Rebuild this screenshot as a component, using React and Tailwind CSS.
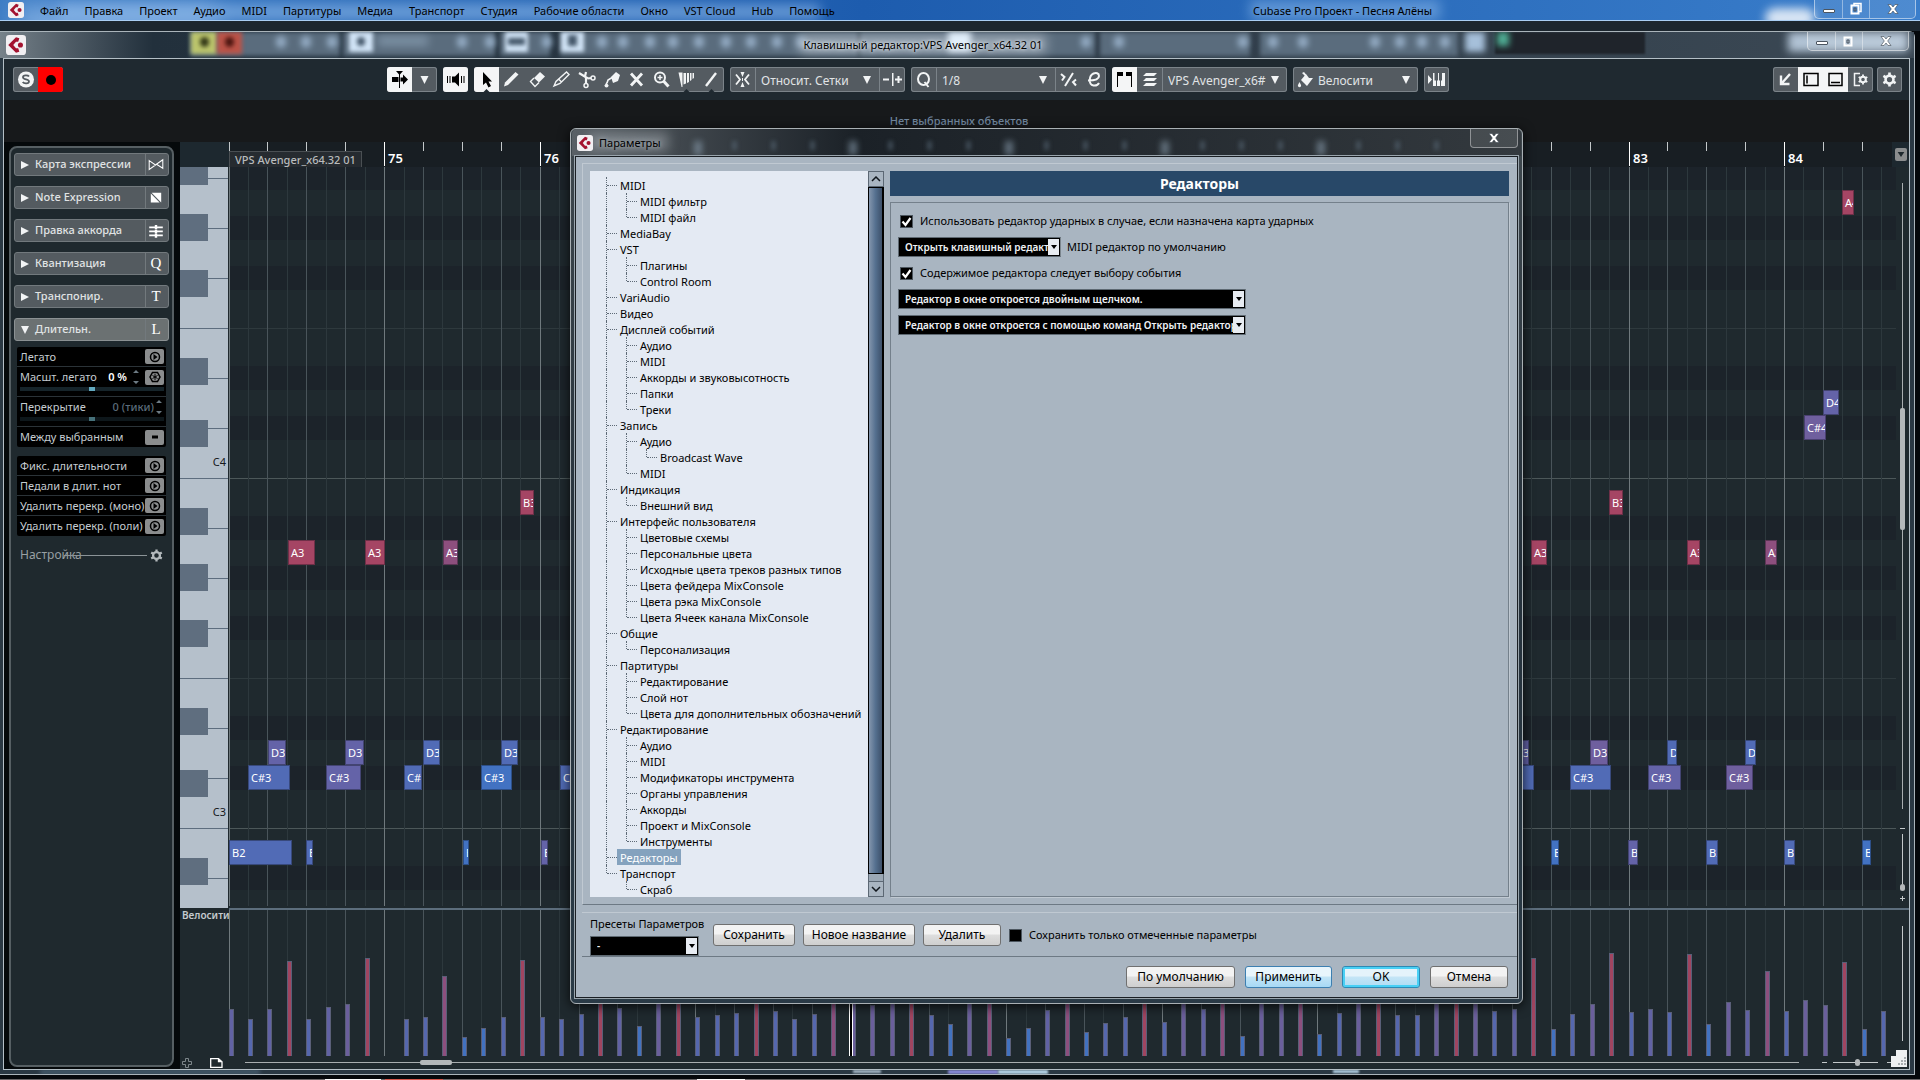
import { useState } from 'react';

const MENU = ['Файл', 'Правка', 'Проект', 'Аудио', 'MIDI', 'Партитуры', 'Медиа', 'Транспорт', 'Студия', 'Рабочие области', 'Окно', 'VST Cloud', 'Hub', 'Помощь'];

// [level, label]
const TREE = [
  [1, 'MIDI'], [2, 'MIDI фильтр'], [2, 'MIDI файл'],
  [1, 'MediaBay'],
  [1, 'VST'], [2, 'Плагины'], [2, 'Control Room'],
  [1, 'VariAudio'],
  [1, 'Видео'],
  [1, 'Дисплей событий'], [2, 'Аудио'], [2, 'MIDI'], [2, 'Аккорды и звуковысотность'], [2, 'Папки'], [2, 'Треки'],
  [1, 'Запись'], [2, 'Аудио'], [3, 'Broadcast Wave'], [2, 'MIDI'],
  [1, 'Индикация'], [2, 'Внешний вид'],
  [1, 'Интерфейс пользователя'], [2, 'Цветовые схемы'], [2, 'Персональные цвета'], [2, 'Исходные цвета треков разных типов'],
  [2, 'Цвета фейдера MixConsole'], [2, 'Цвета рэка MixConsole'], [2, 'Цвета Ячеек канала MixConsole'],
  [1, 'Общие'], [2, 'Персонализация'],
  [1, 'Партитуры'], [2, 'Редактирование'], [2, 'Слой нот'], [2, 'Цвета для дополнительных обозначений'],
  [1, 'Редактирование'], [2, 'Аудио'], [2, 'MIDI'], [2, 'Модификаторы инструмента'], [2, 'Органы управления'],
  [2, 'Аккорды'], [2, 'Проект и MixConsole'], [2, 'Инструменты'],
  [1, 'Редакторы'],
  [1, 'Транспорт'], [2, 'Скраб'],
];

const EIGHTH = 1400 / 72;
const STEPS = Array.from({ length: 86 }, (_, n) => n);
const BARS = [[8, '75'], [16, '76'], [24, '77'], [32, '78'], [40, '79'], [48, '80'], [56, '81'], [64, '82'], [72, '83'], [80, '84']];

const ROW_TOP = { A4: 23, D4: 223, 'C#4': 248, B3: 323, A3: 373, D3: 573, 'C#3': 598, B2: 673 };

// [pitch, left, width, colour]
const NOTES = [
  ['A3', 59, 27, 'red'], ['A3', 136, 20, 'red'], ['A3', 214, 15, 'magenta'], ['B3', 291, 14, 'red'],
  ['C#3', 19, 42, 'slate'], ['C#3', 97, 35, 'violet'], ['C#3', 175, 18, 'slate'], ['C#3', 252, 31, 'blue'], ['C#3', 331, 30, 'slate'],
  ['D3', 39, 18, 'violet'], ['D3', 116, 19, 'violet'], ['D3', 194, 17, 'slate'], ['D3', 272, 17, 'slate'],
  ['B2', 0, 63, 'slate'], ['B2', 77, 7, 'slate'], ['B2', 234, 6, 'blue'], ['B2', 312, 7, 'violet'],
  ['A4', 1613, 12, 'red'], ['D4', 1594, 16, 'violet'], ['C#4', 1575, 22, 'purple'], ['B3', 1380, 14, 'red'],
  ['A3', 1302, 16, 'red'], ['A3', 1458, 13, 'red'], ['A3', 1536, 12, 'magenta'],
  ['D3', 1283, 17, 'violet'], ['D3', 1361, 18, 'purple'], ['D3', 1438, 10, 'slate'], ['D3', 1516, 11, 'slate'],
  ['C#3', 1264, 41, 'slate'], ['C#3', 1341, 41, 'slate'], ['C#3', 1419, 33, 'violet'], ['C#3', 1497, 27, 'purple'],
  ['B2', 1322, 8, 'blue'], ['B2', 1399, 10, 'violet'], ['B2', 1477, 12, 'slate'], ['B2', 1555, 11, 'slate'], ['B2', 1633, 9, 'blue'],
];

const NOTE_COLORS = {
  red: 'bg-[#a54564] border-[#6e3048]',
  magenta: 'bg-[#8d4f7e] border-[#5d3656]',
  purple: 'bg-[#6f5f9e] border-[#4a4070]',
  violet: 'bg-[#6463a8] border-[#434472]',
  slate: 'bg-[#516bb6] border-[#38497c]',
  blue: 'bg-[#4272c2] border-[#2d4f88]',
};

const VELOCITY = [
  47, 37, 47, 95, 37, 49, 52, 98, 0, 37, 39, 80, 19, 28, 39, 96, 39, 37,
  42, 88, 48, 30, 70, 92, 39, 41, 43, 94, 45, 37, 42, 80, 70, 51, 65, 99,
  41, 32, 62, 80, 18, 28, 46, 80, 24, 33, 39, 88, 34, 56, 47, 80, 20, 54,
  54, 80, 22, 43, 66, 98, 41, 41, 66, 96, 54, 45, 47, 98, 27, 42, 52, 103,
  44, 47, 44, 102, 32, 54, 46, 85, 45, 56, 51, 94, 27, 45,
];

function velocityColor(v) {
  if (v >= 88) return 'bg-[#a04560]';
  if (v >= 75) return 'bg-[#8d4f7e]';
  if (v >= 50) return 'bg-[#6b5f9c]';
  if (v >= 46) return 'bg-[#6162a4]';
  if (v >= 33) return 'bg-[#5567ae]';
  return 'bg-[#4272c0]';
}

const BLACK_KEYS = [[0, 18], [47, 27], [103, 27], [191, 27], [253, 27], [341, 27], [397, 27], [453, 27], [541, 27], [603, 27], [691, 27]];
const KEY_LINES = [11, 61, 111, 161, 211, 261, 311, 361, 411, 461, 511, 561, 611, 661, 711];
const DARK_ROWS = [-1, 49, 99, 199, 249, 349, 399, 449, 549, 599, 699];

function Glyph({ children, className = 'size-[25px]' }) {
  return (
    <svg viewBox="0 0 25 25" className={`shrink-0 ${className}`} fill="currentColor" aria-hidden="true">
      {children}
    </svg>
  );
}

function Gear({ className }) {
  return (
    <svg viewBox="0 0 16 16" className={`shrink-0 ${className}`} fill="none" stroke="currentColor" aria-hidden="true">
      <circle cx="8" cy="8" r="4.200" strokeWidth="2.800" />
      <path d="M8 .5v3M8 12.500v3M1.500 4.250l2.600 1.500M11.900 10.250l2.600 1.500M1.500 11.750l2.600-1.500M11.900 5.750l2.600-1.500" strokeWidth="2.800" />
    </svg>
  );
}

function CubaseLogo({ className }) {
  return (
    <svg viewBox="0 0 18 18" className={`shrink-0 ${className}`} aria-hidden="true">
      <rect width="18" height="18" rx="3" fill="#f1eff2" />
      <path d="M2 9 9 2l3 1-1 3-2 0-2.500 3 2.500 3h2l1 3-3 1z" fill="#a3122f" />
      <circle cx="13" cy="9" r="2.300" fill="#a3122f" />
    </svg>
  );
}

function WindowButtons({ className, restore }) {
  return (
    <div className={`absolute top-0 flex h-[19px] w-[102px] rounded-b-[5px] border border-t-0 border-white/50 bg-white/10 text-white ${className}`}>
      <button aria-label="Свернуть" className="flex w-[28px] items-end justify-center border-r border-white/40 pb-[5px]">
        <span className="h-[4px] w-[12px] rounded-[1px] border border-[#4b5560] bg-white" />
      </button>
      <button aria-label="Развернуть" className="flex w-[27px] items-center justify-center border-r border-white/40">
        <svg viewBox="0 0 14 14" className="size-[14px]" fill="none" aria-hidden="true">
          {restore && <path d="M5 4V1.500h7v8H9.500" stroke="#fff" strokeWidth="1.500" />}
          <path d="M2.500 3.500h7v8h-7z" stroke="#fff" strokeWidth="2" />
          <path d="M5 6h2v3H5z" stroke="#4b5560" />
        </svg>
      </button>
      <button aria-label="Закрыть" className="flex flex-1 items-center justify-center">
        <CloseMark />
      </button>
    </div>
  );
}

function CloseMark() {
  return (
    <svg viewBox="0 0 12 10" className="h-[10px] w-[12px]" aria-hidden="true">
      <path d="M1 .5h3l2 2.500L8 .5h3L7.700 5 11 9.500H8L6 7 4 9.500H1L4.300 5z" fill="#fff" stroke="#3d4650" strokeWidth=".6" />
    </svg>
  );
}

function MenuBar() {
  return (
    <header className="relative flex h-[21px] shrink-0 items-center border-b border-[#a9cdf2] bg-gradient-to-r from-[#3d7cc4] via-[#1d5cae] via-45% to-[#3a7ecb] text-[11px] leading-[16px] text-black">
      <div className="absolute inset-0 overflow-hidden">
        <div className="absolute -bottom-3 left-4 h-6 w-[200px] bg-[#a9cdf5] opacity-70 blur-md" />
        <div className="absolute top-1 left-[60px] h-4 w-[760px] bg-[#8db9ea] opacity-60 blur-[6px]" />
        <div className="absolute top-0 left-[1250px] h-5 w-[190px] bg-[#7fb0e6] opacity-60 blur-[6px]" />
        <div className="absolute top-2 left-[1765px] h-5 w-[50px] rounded-full bg-white opacity-80 blur-[5px]" />
      </div>
      <CubaseLogo className="relative ml-[7px] h-[16px] w-[18px]" />
      <nav className="relative ml-[7px] flex pt-px">
        {MENU.map(item => (
          <button key={item} className="px-[8px]">{item}</button>
        ))}
      </nav>
      <div className="absolute top-[3px] left-[1253px]">Cubase Pro Проект - Песня Алёны</div>
      <WindowButtons className="right-[4px]" restore />
    </header>
  );
}

// soft shapes of the project window's toolbar behind the glass: [left, width]
const GHOST_PANELS = [[190, 150], [343, 152], [500, 50], [560, 298], [860, 235], [1100, 150], [1260, 198]];
const GHOST_DOTS = [276, 301, 327, 457, 485, 542, 597, 618, 645, 668, 694, 721, 746, 772, 796, 1081, 1114, 1238, 1268, 1298, 1370, 1395, 1417, 1440];

function TitleBar() {
  return (
    <div className="relative h-[26px] shrink-0 bg-gradient-to-r from-[#77828a] via-[#22303c] via-8% to-[#3b4854]">
      <div className="absolute inset-0 overflow-hidden">
        {GHOST_PANELS.map(([left, width]) => (
          <div key={left} className="absolute top-0 h-[24px] bg-[#5a6c7d] blur-[2px]" style={{ left, width }} />
        ))}
        {GHOST_DOTS.map(left => (
          <div key={left} className="absolute top-[4px] h-[12px] w-[10px] rounded-full bg-[#a6c0da] opacity-80 blur-[3px]" style={{ left }} />
        ))}
        <div className="absolute top-0 left-[191px] h-[22px] w-[26px] bg-[#bcc56c] blur-[2px]" />
        <div className="absolute top-0 left-[217px] h-[22px] w-[25px] bg-[#bb5348] blur-[2px]" />
        <div className="absolute top-[5px] left-[200px] h-[10px] w-[9px] rounded-full bg-[#333818] blur-[2px]" />
        <div className="absolute top-[5px] left-[225px] h-[10px] w-[9px] rounded-full bg-[#4b1510] blur-[2px]" />
        <div className="absolute top-0 left-[349px] h-[20px] w-[24px] bg-[#d3e6f8] blur-[2px]" />
        <div className="absolute top-[5px] left-[357px] h-[9px] w-[8px] rounded-full bg-[#44576a] blur-[2px]" />
        <div className="absolute top-[4px] left-[378px] h-[10px] w-[50px] bg-[#93a9bd] opacity-60 blur-[4px]" />
        <div className="absolute top-0 left-[505px] h-[20px] w-[23px] bg-[#d3e6f8] blur-[2px]" />
        <div className="absolute top-[6px] left-[508px] h-[7px] w-[17px] bg-[#44576a] blur-[2px]" />
        <div className="absolute top-0 left-[561px] h-[20px] w-[23px] bg-[#d3e6f8] blur-[2px]" />
        <div className="absolute top-[3px] left-[568px] h-[11px] w-[9px] bg-[#44576a] blur-[2px]" />
        <div className="absolute top-[3px] left-[800px] h-[18px] w-[246px] bg-[#c4ced8] opacity-60 blur-[6px]" />
        <div className="absolute top-0 left-[948px] h-[20px] w-[23px] bg-[#e2effb] blur-[3px]" />
        <div className="absolute top-0 left-[1465px] h-[20px] w-[20px] bg-[#a6c0da] blur-[3px]" />
        <div className="absolute top-0 left-[1495px] h-[22px] w-[150px] bg-[#1f242b] blur-[1px]" />
        <div className="absolute top-0 left-[1497px] h-[14px] w-[12px] bg-[#4fae94] blur-[3px]" />
        <div className="absolute top-0 left-[1788px] h-[20px] w-[120px] bg-[#cfe2f5] opacity-80 blur-[4px]" />
      </div>
      <CubaseLogo className="absolute top-[3px] left-[5px] h-[20px] w-[22px]" />
      <h1 className="relative pt-[4px] pr-[68px] text-center text-[11px] leading-[18px] text-black [text-shadow:0_0_6px_#e4ebf2,0_0_3px_#e4ebf2]">
        Клавишный редактор:VPS Avenger_x64.32 01
      </h1>
      <WindowButtons className="right-[5px]" />
    </div>
  );
}

function Group({ children }) {
  return (
    <div className="flex h-[25px] overflow-hidden rounded-[3px] bg-[#545b61] text-[#f2f4f5] ring-1 ring-[#7b8389] ring-inset">
      {children}
    </div>
  );
}

function Tool({ label, on, children }) {
  return (
    <button aria-label={label} className={on ? 'w-[25px] bg-[#f4f5f6] text-black' : 'w-[25px]'}>
      <Glyph>{children}</Glyph>
    </button>
  );
}

function ToolSelect({ label, value, className }) {
  return (
    <div className={`relative border-l border-[#7b8389] ${className}`}>
      <select aria-label={label} className="h-[25px] w-full appearance-none bg-transparent pr-[18px] pl-[5px] text-[12px] leading-[25px] text-[#e1e4e6]">
        <option>{value}</option>
      </select>
      <Triangle className="pointer-events-none absolute top-[9px] right-[8px]" />
    </div>
  );
}

function Triangle({ className }) {
  return (
    <svg viewBox="0 0 8 8" className={`size-[8px] ${className}`} fill="#f2f4f5" aria-hidden="true">
      <path d="M0 0h8L4 8z" />
    </svg>
  );
}

function Toolbar() {
  return (
    <div className="flex h-[41px] shrink-0 items-start justify-between bg-[#1f2930] pt-[8px] pr-[7px] pl-[9px]">
      <div className="flex">
        <Group>
          <Tool label="Соло">
            <circle cx="13" cy="12.500" r="8" />
            <path d="M16 9.500c-1-1.500-6-1.600-6 .7 0 2.800 6 1.500 6 4.300 0 2.300-5 2.300-6.300.5" fill="none" stroke="#545b61" strokeWidth="1.800" />
          </Tool>
          <button aria-label="Запись" className="flex w-[25px] items-center justify-center bg-[#fe0000]">
            <span className="size-[10px] rounded-full bg-black" />
          </button>
        </Group>
      </div>

      <div className="flex gap-[6px]">
        <Group>
          <Tool label="Автопрокрутка" on>
            <path d="M5 10h6.500v5H5zM13.500 10.500h2.500V7.500l5 5-5 5v-3h-2.500zM12 5h1v16h-1zM9 4h7l-3.500 4z" />
          </Tool>
          <Tool label="Параметры автопрокрутки"><path d="M8.500 9h8l-4 8z" /></Tool>
        </Group>
        <Group>
          <Tool label="Акустическая обратная связь" on>
            <path d="M4 9h1v7H4zM6.500 9h1v7h-1zM9 9.500h3l4-4v14l-4-4H9zM18 9h1v7h-1zM20.500 9h1v7h-1z" />
          </Tool>
        </Group>
        <Group>
          <Tool label="Выбор объектов" on>
            <path d="M9 5v13l3-2.500 2.500 5 2.500-1.500-2.500-4.500H18z" />
            <path d="M9.500 25l3-3 3 3z" fill="#1f2930" />
          </Tool>
          <Tool label="Карандаш"><path d="M5 19.500l1-4L16.500 5l3 2.500L9 18z" /></Tool>
          <Tool label="Ластик">
            <path d="M10 11l6-6 5 4.500-6 6z" />
            <path d="M10 11l-3.500 3.500 4.500 5 4-4" fill="none" stroke="currentColor" strokeWidth="1.400" />
          </Tool>
          <Tool label="Обрезка"><path d="M5 19l2-4.500L17.500 5l2.500 2.500L11 16.500zM10 12.500l2.500 2.500" fill="none" stroke="currentColor" strokeWidth="1.400" /></Tool>
          <Tool label="Ножницы">
            <path d="M5 6l9 5.500M12 5l-1 4.500M12 11l0 6M14 11.500l3-.5" fill="none" stroke="currentColor" strokeWidth="2.200" />
            <circle cx="12" cy="18.500" r="2" fill="none" stroke="currentColor" strokeWidth="1.500" />
            <circle cx="19" cy="11" r="2" fill="none" stroke="currentColor" strokeWidth="1.500" />
          </Tool>
          <Tool label="Клей">
            <path d="M12 10l5-5 4 3-2 6-5 2z" />
            <path d="M14 10l-5 3-1 3" fill="none" stroke="currentColor" strokeWidth="1.600" />
            <path d="M7.500 15l2 3.500a2 2 0 11-4 0z" />
          </Tool>
          <Tool label="Заглушить"><path d="M7 6.500l11 12M18 6.500l-11 12" stroke="currentColor" strokeWidth="2.800" /></Tool>
          <Tool label="Масштаб">
            <circle cx="11" cy="10.500" r="5" fill="none" stroke="currentColor" strokeWidth="2" />
            <path d="M8.500 10.500h5M11 8v5" stroke="currentColor" strokeWidth="1.500" />
            <path d="M14.500 14l5 5.500" stroke="currentColor" strokeWidth="3" />
          </Tool>
          <Tool label="Компинг">
            <path d="M4.500 5.500h4v14.500h-1zM9.500 6h2.500v10.500l-2.500 1zM13 6h2v9l-2 1zM16 6h1.500v7l-1.500 1zM18.500 6h1.500v5l-1.500 1z" />
            <path d="M9.500 25l3-3 3 3z" fill="#1f2930" />
          </Tool>
          <Tool label="Линия">
            <path d="M7 19L17 6" stroke="currentColor" strokeWidth="2.400" />
            <path d="M9.500 25l3-3 3 3z" fill="#1f2930" />
          </Tool>
        </Group>
        <Group>
          <Tool label="Привязка">
            <path d="M6 7.500l4 5-4 5M19 7.500l-4 5 4 5" fill="none" stroke="currentColor" strokeWidth="1.800" />
            <path d="M10.500 5h4l-2 5zM10.500 20h4l-2-5zM12 11h1v3h-1z" />
          </Tool>
          <ToolSelect label="Тип привязки" value="Относит. Сетки" className="w-[124px]" />
          <div className="border-l border-[#7b8389]">
            <Tool label="Тип сетки"><path d="M3 11.500h6v2H3zM12 6h1.500v13H12zM15 11.500h7v2h-7zM17.500 9h2v7h-2z" /></Tool>
          </div>
        </Group>
        <Group>
          <Tool label="Квантизация">
            <path d="M7 12a5.500 6 0 1011 0 5.500 6 0 10-11 0M13.500 15l4 5" fill="none" stroke="currentColor" strokeWidth="2" />
          </Tool>
          <ToolSelect label="Пресеты квантизации" value="1/8" className="w-[119px]" />
          <div className="flex border-l border-[#7b8389]">
            <Tool label="Итеративная квантизация">
              <path d="M17 6L9 19M5 7l3.500 3L6 13.500M20 12.500l-3 2.500 3 3.500" fill="none" stroke="currentColor" strokeWidth="2" />
            </Tool>
            <Tool label="Панель квантизации">
              <path d="M7 13.500c8 0 11-2 11-4.500 0-3-3-3.500-5.500-2.500-4.500 2-5.500 11 0 12 2.500.3 4.500-.5 5.500-2.500" fill="none" stroke="currentColor" strokeWidth="2" />
            </Tool>
          </div>
        </Group>
        <Group>
          <Tool label="Границы партий" on><path d="M5 5h1v15H5zM6 5h5v4H6zM19 5h1v15h-1zM14 5h5v4h-5z" /></Tool>
          <Tool label="Редактировать активную партию">
            <path d="M9 6h11l-3 3H6zM9 11h11l-3 3H6zM9 16h11l-3 3H6z" />
          </Tool>
          <ToolSelect label="Активная партия" value="VPS Avenger_x6#" className="w-[125px]" />
        </Group>
        <div className="flex h-[25px] rounded-[3px] bg-[#545b61] text-[#f2f4f5] ring-1 ring-[#7b8389] ring-inset">
          <Glyph>
            <path d="M8 13l5-6 3 4h4l-6 8-3-3zM9 6l2-1 5 6-1.500.5z" />
            <path d="M6.500 15l1.500 3a1.600 1.600 0 11-3 0z" />
          </Glyph>
          <div className="relative">
            <select aria-label="Цвета событий" className="h-[25px] w-[100px] appearance-none bg-transparent text-[12px] leading-[25px] text-[#e1e4e6]">
              <option>Велосити</option>
            </select>
            <Triangle className="pointer-events-none absolute top-[9px] right-[8px]" />
          </div>
        </div>
        <Group>
          <Tool label="Пошаговый ввод">
            <path d="M4 8l4 4.500L4 17zM9 6h1.500v7.500h1.500V19H9zM13 19v-5.500h1V6h1v7.500h1V19zM17 19v-5.500h1V6h3v13z" />
          </Tool>
        </Group>
      </div>

      <div className="flex gap-[4px]">
        <Group>
          <Tool label="Открыть в нижней зоне"><path d="M17 7l-8 9M8 8.500v8.500h8.500" fill="none" stroke="currentColor" strokeWidth="2.400" /></Tool>
          <Tool label="Левая зона" on><path d="M6 6.500h14v12H6zM9 8.500v8" fill="none" stroke="currentColor" strokeWidth="1.500" /></Tool>
          <Tool label="Нижняя зона" on><path d="M6 6.500h13v12H6zM8 15.500h9" fill="none" stroke="currentColor" strokeWidth="1.500" /></Tool>
          <Tool label="Настройка зон">
            <path d="M12 6.500H6.500v12H12" fill="none" stroke="currentColor" strokeWidth="1.500" />
            <circle cx="15" cy="12.500" r="2.800" fill="none" stroke="currentColor" strokeWidth="2" />
            <path d="M15 7.500v2M15 15.500v2M10.700 10l1.700 1M17.600 14l1.700 1M10.700 15l1.700-1M17.600 11l1.700-1" stroke="currentColor" strokeWidth="1.800" />
          </Tool>
        </Group>
        <Group>
          <button aria-label="Настройка панели" className="flex w-[25px] items-center justify-center">
            <Gear className="size-[15px]" />
          </button>
        </Group>
      </div>
    </div>
  );
}

const SECTIONS = [
  ['Карта экспрессии', <path d="M4 7l8 5.500L4 18zM21 6l-8 5.500 8 5z" fill="none" stroke="currentColor" strokeWidth="1.300" />],
  ['Note Expression', <path d="M7 6h12v12zM6 7v11h11z" />],
  ['Правка аккорда', <path d="M4 7h17v2H4zM4 12h17v2H4zM4 17h17v2H4zM11 5h3v5h-3zM11 10.500h3v5h-3zM11 16h3v5h-3z" />],
  ['Квантизация', 'Q'],
  ['Транспонир.', 'T'],
  ['Длительн.', 'L'],
];

function ActionButton({ label, children }) {
  return (
    <button aria-label={label} className="flex h-[15px] w-[19px] shrink-0 items-center justify-center rounded-[2px] bg-[#8b8d8e]">
      <svg viewBox="0 0 12 12" className="size-[12px]" fill="none" stroke="#000" strokeWidth="1.500" aria-hidden="true">
        {children}
      </svg>
    </button>
  );
}

const PLAY = <><circle cx="6" cy="6" r="4.500" /><path d="M4.500 3l4 3-4 3z" fill="#000" stroke="none" /></>;

function Spin({ className }) {
  return (
    <svg viewBox="0 0 6 14" className={`h-[14px] w-[6px] shrink-0 ${className}`} fill="#6d7b84" aria-hidden="true">
      <path d="M3 0l3 3H0zM3 14l3-3H0z" />
    </svg>
  );
}

function InspectorRow({ label, children }) {
  return (
    <div className="flex h-[20px] items-center justify-between border-b border-[#2b3338] pr-[2px] pl-[3px] last:border-b-0">
      <span className="whitespace-nowrap">{label}</span>
      {children}
    </div>
  );
}

function Inspector() {
  return (
    <aside className="w-[176px] shrink-0 bg-[#05090b] pt-[4px] pb-[2px] pl-[5px]">
      <div className="h-full w-[165px] rounded-[8px] border-2 border-[#565f63] bg-[#1f292e] px-[3px] pt-[5px]">
        <div className="flex flex-col gap-[10px]">
          {SECTIONS.map(([name, icon], i) => (
            <button
              key={name}
              className={`flex h-[23px] items-center rounded-[3px] border text-[11px] font-medium text-[#e0e3e4] ${i === 5 ? 'border-[#8b9193] bg-[#6b7172]' : 'border-[#72797d] bg-[#545b60]'}`}
            >
              <svg viewBox="0 0 8 8" className="mx-[6px] size-[8px]" fill="#f2f4f5" aria-hidden="true">
                <path d={i === 5 ? 'M0 0h8L4 8z' : 'M0 0l8 4-8 4z'} />
              </svg>
              <span className="flex-1 text-left whitespace-nowrap">{name}</span>
              <span className="flex h-full w-[23px] items-center justify-center border-l border-[#72797d] pr-[2px] text-[15px] text-white">
                {typeof icon === 'string' ? <span className="font-['Liberation_Serif',serif]">{icon}</span> : <Glyph className="size-[20px]">{icon}</Glyph>}
              </span>
            </button>
          ))}
        </div>

        <div className="mx-[3px] mt-[6px] flex flex-col gap-[9px] text-[11px] leading-[14px] text-[#c5ccd1]">
          <div className="rounded-[2px] bg-black">
            <InspectorRow label="Легато"><ActionButton label="Легато">{PLAY}</ActionButton></InspectorRow>
            <div className="h-[30px] border-b border-[#2b3338] pr-[2px] pl-[3px]">
              <div className="flex h-[20px] items-center">
                <span className="flex-1">Масшт. легато</span>
                <span className="font-semibold text-white">0 %</span>
                <Spin className="mx-[6px]" />
                <ActionButton label="Масштаб легато">
                  <path d="M3.500 1.500h5l2.500 4.500-2.500 4.500h-5L1 6z" />
                  <path d="M6 3v6M3.500 4.500l5 3M8.500 4.500l-5 3" strokeWidth="1" />
                </ActionButton>
              </div>
              <input type="range" aria-label="Масштаб легато" className="block h-[4px] w-full appearance-none bg-[#16242a] [&::-webkit-slider-thumb]:h-[4px] [&::-webkit-slider-thumb]:w-[6px] [&::-webkit-slider-thumb]:appearance-none [&::-webkit-slider-thumb]:bg-[#62a9bf]" />
            </div>
            <div className="h-[30px] border-b border-[#2b3338] pr-[2px] pl-[3px]">
              <div className="flex h-[20px] items-center">
                <span className="flex-1">Перекрытие</span>
                <span className="font-medium text-[#5c6c7a]">0 (тики)</span>
                <Spin className="mx-[2px]" />
              </div>
              <input type="range" aria-label="Перекрытие" className="block h-[4px] w-full appearance-none bg-[#0e171b] [&::-webkit-slider-thumb]:h-[4px] [&::-webkit-slider-thumb]:w-[6px] [&::-webkit-slider-thumb]:appearance-none [&::-webkit-slider-thumb]:bg-[#46717a]" />
            </div>
            <InspectorRow label="Между выбранным"><ActionButton label="Между выбранным"><path d="M3 6h6" strokeWidth="3" /></ActionButton></InspectorRow>
          </div>
          <div className="rounded-[2px] bg-black">
            {['Фикс. длительности', 'Педали в длит. нот', 'Удалить перекр. (моно)', 'Удалить перекр. (поли)'].map(label => (
              <InspectorRow key={label} label={label}><ActionButton label={label}>{PLAY}</ActionButton></InspectorRow>
            ))}
          </div>
        </div>

        <div className="mx-[6px] mt-[10px] flex items-center text-[12px] leading-[18px] text-[#98a0a4]">
          <span>Настройка</span>
          <span className="-ml-[18px] mr-[3px] h-px flex-1 bg-[#8b9397]" />
          <Gear className="size-[13px] text-[#b4babd]" />
        </div>
      </div>
    </aside>
  );
}

function Ruler() {
  return (
    <div className="flex h-[25px] shrink-0 bg-[#1d282f]">
      <div className="w-[49px] shrink-0" />
      <div className="relative flex-1 overflow-hidden bg-[#181e23]">
        {STEPS.filter(n => n % 2 === 0).map(n => (
          <div key={n} className={n % 8 === 0 && n > 0 ? 'absolute top-0 h-[24px] w-px bg-white' : 'absolute top-0 h-[9px] w-px bg-[#c3c8ca]'} style={{ left: Math.floor(n * EIGHTH) }} />
        ))}
        {BARS.map(([n, label]) => (
          <span key={label} className="absolute top-[7px] text-[13px] leading-[18px] font-semibold text-white" style={{ left: Math.floor(n * EIGHTH) + 4 }}>{label}</span>
        ))}
        <span className="absolute bottom-0 left-0 h-[16px] border border-b-0 border-[#4a4f53] bg-[#262b30] px-[5px] text-[11px] leading-[15px] font-medium whitespace-nowrap text-[#b9bbbc]">VPS Avenger_x64.32 01</span>
      </div>
      <div className="w-[17px] shrink-0 pt-[6px] pl-[3px]">
        <button aria-label="Формат линейки" className="flex h-[13px] w-[12px] items-center justify-center rounded-[2px] bg-[#8b8d8e]">
          <svg viewBox="0 0 8 6" className="h-[5px] w-[8px]" aria-hidden="true"><path d="M0 0h8L4 6z" fill="#1f292e" /></svg>
        </button>
      </div>
    </div>
  );
}

function Keyboard() {
  return (
    <div className="relative w-[48px] shrink-0 overflow-hidden bg-[#b5c0cb]">
      <svg className="absolute inset-0 h-full w-full" shapeRendering="crispEdges" aria-hidden="true">
        {KEY_LINES.map(y => <rect key={y} x="0" y={y} width="48" height="1" fill="#5d6d7e" />)}
        {KEY_LINES.filter(y => ![161, 311, 511, 661].includes(y)).map(y => <rect key={y} x="0" y={y} width="28" height="1" fill="#b5c0cb" />)}
        {BLACK_KEYS.map(([y, h]) => <rect key={y} x="0" y={y} width="28" height={h} fill="#5f6e7f" />)}
      </svg>
      <span className="absolute top-[287px] right-[2px] text-[11px] leading-[16px] text-[#16191c]">C4</span>
      <span className="absolute top-[637px] right-[2px] text-[11px] leading-[16px] text-[#16191c]">C3</span>
    </div>
  );
}

function gridColor(n) {
  if (n % 8 === 0) return '#6f797d';
  return n % 2 === 0 ? '#49545a' : '#2d383d';
}

function NoteGrid() {
  return (
    <div className="relative ml-px flex-1 overflow-hidden bg-[#1f292e]">
      <svg className="absolute inset-0 h-full w-full" shapeRendering="crispEdges" aria-hidden="true">
        {DARK_ROWS.map(y => <rect key={y} x="0" y={y} width="100%" height="24" fill="#1c232a" />)}
        {[161, 511].map(y => <rect key={y} x="0" y={y} width="100%" height="1" fill="#2e393d" />)}
        {[311, 661].map(y => <rect key={y} x="0" y={y} width="100%" height="1" fill="#4c5759" />)}
        {STEPS.map(n => <rect key={n} x={Math.floor(n * EIGHTH)} y="0" width="1" height="739" fill={gridColor(n)} />)}
      </svg>
      {NOTES.map(([pitch, left, width, color]) => (
        <div
          key={pitch + left}
          className={`absolute h-[25px] overflow-hidden border pl-[2px] text-[11px] leading-[23px] text-white ${NOTE_COLORS[color]}`}
          style={{ left, width, top: ROW_TOP[pitch] }}
        >
          {pitch}
        </div>
      ))}
    </div>
  );
}

function VerticalScroll() {
  return (
    <div className="flex w-[13px] shrink-0 flex-col items-center pt-[16px]">
      <div className="relative w-px flex-1 bg-[#a9aeb0]">
        <span className="absolute top-[36%] -left-[2px] h-[122px] w-[5px] rounded-[2px] bg-[#b4b8ba]" />
      </div>
      <span className="mt-[19px] h-px w-[5px] bg-[#c3c8ca]" />
      <span className="mt-[5px] h-[50px] w-px bg-[#c3c8ca]" />
      <span className="h-[7px] w-[5px] rounded-full bg-[#b4b8ba]" />
      <svg viewBox="0 0 5 5" className="mt-[5px] mb-[7px] size-[5px]" aria-hidden="true"><path d="M2 0h1v5H2zM0 2h5v1H0z" fill="#c3c8ca" /></svg>
    </div>
  );
}

function VelocityLane() {
  return (
    <div className="flex h-[148px] shrink-0">
      <div className="w-[49px] shrink-0 bg-[#1f292e] pl-[2px] text-[10px] leading-[14px] font-semibold text-[#c5cbce]">Велосити</div>
      <div className="relative flex-1 overflow-hidden border-t-2 border-[#5c6d7c] bg-[#1f292e]">
        <svg className="absolute inset-0 h-full w-full" shapeRendering="crispEdges" aria-hidden="true">
          {STEPS.map(n => <rect key={n} x={Math.floor(n * EIGHTH)} y="0" width="1" height="100%" fill={gridColor(n)} />)}
        </svg>
        {VELOCITY.map((v, n) => v > 0 && (
          <div key={n} className={`absolute bottom-0 w-[5px] border-x border-t border-[#5a5f78] ${velocityColor(v)}`} style={{ left: Math.floor(n * EIGHTH), height: v }} />
        ))}
        <div className="absolute inset-y-0 left-[620px] w-[4px] border-x border-white bg-black" />
      </div>
      <div className="flex w-[13px] shrink-0 justify-center border-t-2 border-[#5c6d7c] pt-[16px] pb-[15px]">
        <span className="w-px bg-[#c3c8ca]" />
      </div>
    </div>
  );
}

function BottomBar() {
  return (
    <div className="flex h-[13px] shrink-0 items-center">
      <svg viewBox="0 0 10 10" className="ml-[2px] size-[10px]" fill="none" stroke="#7d868a" aria-hidden="true">
        <path d="M3.500.5h3v3h3v3h-3v3h-3v-3h-3v-3h3z" />
      </svg>
      <svg viewBox="0 0 13 10" className="ml-[18px] h-[10px] w-[13px]" fill="none" stroke="#fff" strokeWidth="1.300" aria-hidden="true">
        <path d="M.7.7H8.500l3.500 3v5.600H.7zM8.500.7v3h3.500" />
      </svg>
      <div className="relative ml-[22px] h-px flex-1 bg-[#a9aeb0]">
        <span className="absolute -top-[2px] left-[175px] h-[5px] w-[32px] rounded-[2px] bg-[#b4b8ba]" />
      </div>
      <span className="ml-[23px] h-px w-[5px] bg-[#c3c8ca]" />
      <span className="ml-[6px] h-px w-[22px] bg-[#c3c8ca]" />
      <span className="h-[7px] w-[5px] rounded-full bg-[#b4b8ba]" />
      <span className="h-px w-[18px] bg-[#c3c8ca]" />
      <span className="ml-[9px] h-px w-[4px] bg-[#c3c8ca]" />
      <span className="mr-[2px] mb-[8px] flex h-[17px] w-[16px] items-end justify-end bg-[#eef0f1] p-px">
        <svg viewBox="0 0 9 9" className="size-[9px]" fill="#a8adb0" aria-hidden="true">
          <path d="M7 0h2v2H7zM4 3h2v2H4zM7 3h2v2H7zM1 6h2v2H1zM4 6h2v2H4zM7 6h2v2H7z" />
        </svg>
      </span>
    </div>
  );
}

function TreeItem({ level, label, last, onSelect, selected }) {
  const indent = { 1: 'pl-[26px]', 2: 'pl-[46px]', 3: 'pl-[66px]' }[level];
  return (
    <li className={`relative flex h-[16px] items-center ${indent}`}>
      {!last.root && <i className="absolute top-0 bottom-0 left-[16px] border-l border-dotted border-[#5e6a76]" />}
      {last.root && level === 1 && <i className="absolute top-0 left-[16px] h-[8px] border-l border-dotted border-[#5e6a76]" />}
      {level > 1 && !last.second && <i className="absolute top-0 bottom-0 left-[36px] border-l border-dotted border-[#5e6a76]" />}
      {level === 2 && last.second && <i className="absolute top-0 left-[36px] h-[8px] border-l border-dotted border-[#5e6a76]" />}
      {level === 3 && <i className="absolute top-0 left-[56px] h-[8px] border-l border-dotted border-[#5e6a76]" />}
      <i className="-ml-[9px] h-px w-[10px] shrink-0 border-t border-dotted border-[#5e6a76]" />
      <button
        onClick={onSelect}
        className={selected ? 'h-[16px] bg-[#84a2be] px-[3px] whitespace-nowrap text-white' : 'h-[16px] px-[3px] whitespace-nowrap text-black'}
      >
        {label}
      </button>
    </li>
  );
}

function branchEnds(i) {
  const rest = TREE.slice(i + 1);
  const nextRoot = rest.findIndex(([level]) => level === 1);
  const nextSecond = rest.findIndex(([level]) => level === 2);
  return {
    root: nextRoot === -1,
    second: nextSecond === -1 || (nextRoot !== -1 && nextRoot < nextSecond),
  };
}

function PrefTree() {
  const [selected, setSelected] = useState(42);
  return (
    <div className="flex h-[726px] shrink-0">
      <ul className="w-[278px] bg-[#e4eaf3] pt-[6px] text-[11px] leading-[15px]">
        {TREE.map(([level, label], i) => (
          <TreeItem key={i} level={level} label={label} last={branchEnds(i)} selected={i === selected} onSelect={() => setSelected(i)} />
        ))}
      </ul>
      <div className="flex w-[16px] flex-col bg-[#9ba8b5]">
        <button aria-label="Вверх" className="flex h-[16px] items-center justify-center border border-[#5c6874] bg-[#a9b5c1]">
          <svg viewBox="0 0 10 6" className="h-[6px] w-[10px]" fill="none" stroke="#10161c" strokeWidth="1.500" aria-hidden="true"><path d="M1 5l4-4 4 4" /></svg>
        </button>
        <div className="flex-1 border border-r-2 border-black bg-gradient-to-r from-[#8496ad] via-[#55708f] to-[#3d506a]" />
        <div className="h-[7px] border-x border-[#5c6874]" />
        <button aria-label="Вниз" className="flex h-[16px] items-center justify-center border border-[#5c6874] bg-[#a9b5c1]">
          <svg viewBox="0 0 10 6" className="h-[6px] w-[10px]" fill="none" stroke="#10161c" strokeWidth="1.500" aria-hidden="true"><path d="M1 1l4 4 4-4" /></svg>
        </button>
      </div>
    </div>
  );
}

function Combo({ id, label, value, className }) {
  return (
    <div className={`relative h-[20px] border border-[#5e6972] border-r-[#7b858d] bg-black ${className}`}>
      <select id={id} aria-label={label} className="block h-[18px] w-full appearance-none overflow-hidden bg-black pr-[12px] pl-[6px] text-[10px] leading-[18px] font-semibold text-[#eef1f4]">
        <option>{value}</option>
      </select>
      <span className="pointer-events-none absolute top-px right-px flex h-[16px] w-[11px] items-center justify-center bg-[#e8ecf2]">
        <svg viewBox="0 0 6 4" className="h-[4px] w-[6px]" aria-hidden="true"><path d="M0 0h6L3 4z" /></svg>
      </span>
    </div>
  );
}

function Check({ label, checked, className = '' }) {
  return (
    <label className={`flex items-center gap-[7px] ${className}`}>
      <span className="relative size-[13px]">
        <input type="checkbox" defaultChecked={checked} className="peer block size-[13px] appearance-none border border-[#4c565f] bg-black" />
        <svg viewBox="0 0 13 13" className="pointer-events-none absolute inset-0 hidden size-[13px] peer-checked:block" fill="none" aria-hidden="true">
          <path d="M2.500 6.500l3 3.500 5-7" stroke="#fff" strokeWidth="2.200" />
        </svg>
      </span>
      {label}
    </label>
  );
}

const BUTTON_TONES = {
  plain: 'border-[#707070] bg-gradient-to-b from-[#f3f3f3] from-45% via-[#dedede] via-50% to-[#cfcfcf]',
  hover: 'border-[#3c7fb1] bg-gradient-to-b from-[#e8f5fc] from-45% via-[#c2e4f6] via-50% to-[#a7d9f5]',
  focus: 'border-[#2c89b4] ring-2 ring-[#49d0f5] ring-inset bg-gradient-to-b from-[#e4f3fb] from-45% via-[#c4e5f6] via-50% to-[#aedcf4]',
};

function PushButton({ children, tone = 'plain', className }) {
  return (
    <button className={`h-[22px] rounded-[3px] border text-[12px] leading-[18px] text-black ${BUTTON_TONES[tone]} ${className}`}>
      {children}
    </button>
  );
}

function PreferencesDialog() {
  return (
    <section role="dialog" aria-label="Параметры" className="absolute top-[128px] left-[570px] w-[953px] rounded-[6px] border border-[#a9b0b4] bg-gradient-to-b from-[#3f484e] via-[#25313b] to-[#2a3a46] px-[4px] pb-[5px] shadow-[0_2px_12px_rgba(0,0,0,0.8)]">
      <div className="absolute top-0 left-px h-[27px] w-[949px] overflow-hidden rounded-t-[5px] bg-gradient-to-r from-[#596066] via-[#1b2127] via-30% to-[#33393e]">
        {[122, 160, 199, 238, 277, 316, 355, 394, 433, 472, 511, 550, 589, 628, 667, 706, 745, 784, 823, 862].map((left, i) => (
          <span key={left} className={i % 4 === 0 ? 'absolute top-[12px] h-[14px] w-[8px] bg-[#8ba0b0] opacity-60 blur-[3px]' : 'absolute top-[12px] h-[9px] w-[5px] bg-[#5f7180] opacity-50 blur-[2px]'} style={{ left }} />
        ))}
        <span className="absolute top-[4px] left-[16px] h-[18px] w-[80px] bg-[#9aa1a6] opacity-60 blur-[6px]" />
      </div>
      <header className="relative flex h-[27px] items-center">
        <CubaseLogo className="ml-[2px] size-[16px]" />
        <h2 className="ml-[6px] text-[11px] leading-[18px] text-black [text-shadow:0_0_5px_#b5bcc2]">Параметры</h2>
        <button aria-label="Закрыть" className="absolute top-0 right-0 flex h-[19px] w-[48px] items-center justify-center rounded-b-[4px] border border-t-0 border-white/40 bg-white/10">
          <CloseMark />
        </button>
      </header>

      <div className="relative border border-[#1a1f24] bg-[#a9b5c1] pt-[6px] pb-[9px] pl-[6px] text-[11px] leading-[16px] text-black outline outline-[#9aa5ad]">
        <div className="flex gap-[6px] border-t border-b border-l border-t-[#c0c9d2] border-b-[#6d7984] border-l-[#c0c9d2] pt-[7px] pr-[8px] pb-[7px] pl-[7px]">
          <PrefTree />
          <div className="flex min-w-0 flex-1 flex-col">
            <h3 className="h-[25px] bg-[#284868] text-center text-[14px] leading-[26px] font-bold text-white">Редакторы</h3>
            <div className="mt-[6px] flex flex-1 flex-col gap-[6px] border border-[#74808b] pt-[8px] pl-[7px] shadow-[1px_1px_0_#c0c9d2]">
              <Check checked label="Использовать редактор ударных в случае, если назначена карта ударных" className="h-[20px] pl-[2px]" />
              <div className="flex items-center gap-[6px]">
                <Combo id="default-editor" value="Открыть клавишный редактор" className="w-[163px]" />
                <label htmlFor="default-editor">MIDI редактор по умолчанию</label>
              </div>
              <Check checked label="Содержимое редактора следует выбору события" className="h-[20px] pl-[2px]" />
              <Combo label="Двойной щелчок" value="Редактор в окне откроется двойным щелчком." className="w-[348px]" />
              <Combo label="Открыть редактор" value="Редактор в окне откроется с помощью команд Открыть редактор" className="w-[348px]" />
            </div>
          </div>
        </div>

        <div className="mt-[7px] flex h-[45px] border-t border-b border-t-[#c0c9d2] border-b-[#6d7984] pl-[8px]">
          <div className="w-[123px] pt-[3px]">
            <label htmlFor="preset" className="block whitespace-nowrap">Пресеты Параметров</label>
            <Combo id="preset" value="-" className="mt-[4px] w-[109px]" />
          </div>
          <div className="flex items-start gap-[8px] pt-[11px]">
            <PushButton className="w-[82px]">Сохранить</PushButton>
            <PushButton className="w-[112px]">Новое название</PushButton>
            <PushButton className="w-[78px]">Удалить</PushButton>
            <Check label="Сохранить только отмеченные параметры" className="h-[22px]" />
          </div>
        </div>

        <div className="mt-[9px] flex justify-end gap-[10px] pr-[9px]">
          <PushButton className="w-[109px]">По умолчанию</PushButton>
          <PushButton tone="hover" className="w-[87px]">Применить</PushButton>
          <PushButton tone="focus" className="w-[78px]">OK</PushButton>
          <PushButton className="w-[78px]">Отмена</PushButton>
        </div>
      </div>
    </section>
  );
}

export default function App() {
  return (
    <div className="relative flex h-screen flex-col overflow-hidden bg-[#05080b] font-['Noto_Sans',sans-serif]">
      <MenuBar />
      <div className="h-[10px] shrink-0 bg-[#1c262e]" />

      <main className="relative mr-[5px] mb-[5px] flex min-h-0 flex-1 flex-col rounded-tr-[6px] border-t border-r border-b border-[#aab4ba] bg-[#2a3843]">
        <TitleBar />
        <div className="mr-[4px] mb-[4px] ml-[3px] flex min-h-0 flex-1 flex-col border border-[#b4bfc6] bg-[#1f292e]">
          <Toolbar />
          <div className="h-[42px] shrink-0 bg-[#17191b] pt-[12px] pl-[5px] text-center text-[11px] leading-[18px] font-medium text-[#7288a0]">Нет выбранных объектов</div>
          <div className="flex min-h-0 flex-1">
            <Inspector />
            <div className="flex min-w-0 flex-1 flex-col">
              <Ruler />
              <div className="flex min-h-0 flex-1">
                <Keyboard />
                <NoteGrid />
                <VerticalScroll />
              </div>
              <VelocityLane />
              <BottomBar />
            </div>
          </div>
        </div>
        {/* taskbar glow under the bottom edge */}
        <div className="absolute inset-x-0 bottom-0 h-[4px] overflow-hidden">
          <span className="absolute top-0 left-[40px] h-[4px] w-[220px] bg-[#4a6274] blur-[2px]" />
          <span className="absolute top-0 left-[853px] h-[3px] w-[28px] bg-[#a9bccb] blur-[1px]" />
          <span className="absolute top-0 left-[948px] h-[4px] w-[50px] bg-[#8b8cdb] blur-[1px]" />
          <span className="absolute top-0 left-[998px] h-[4px] w-[50px] bg-[#b7d6ea] blur-[1px]" />
          <span className="absolute top-0 left-[1333px] h-[3px] w-[26px] bg-[#b7d6ea] blur-[1px]" />
        </div>
      </main>

      <div className="absolute bottom-0 left-0 flex h-px w-full bg-[#6a6668]">
        <span className="ml-[325px] w-[56px] bg-white" />
        <span className="ml-[4px] w-[58px] bg-[#d5574c]" />
        <span className="ml-[254px] w-[48px] bg-white" />
      </div>

      <PreferencesDialog />
    </div>
  );
}
